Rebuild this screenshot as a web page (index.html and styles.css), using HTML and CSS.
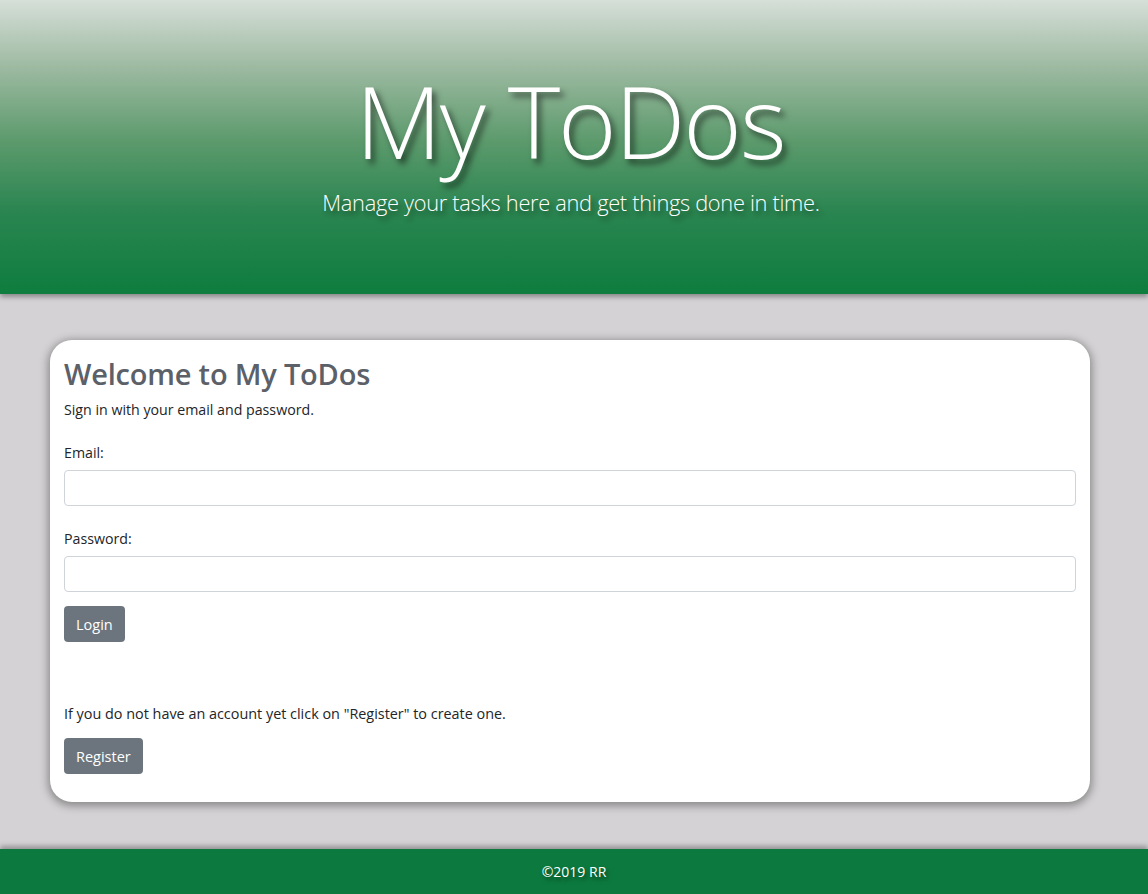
FILE: index.html
```html
<!DOCTYPE html>
<html lang="en">
<head>
<meta charset="utf-8">
<title>My ToDos</title>
<link rel="stylesheet" href="styles.css">
</head>
<body>
<header class="hero">
  <h1 class="hero-title">My ToDos</h1>
  <p class="hero-sub">Manage your tasks here and get things done in time.</p>
</header>
<main class="main">
  <section class="card">
    <h2 class="card-title">Welcome to My ToDos</h2>
    <p class="intro">Sign in with your email and password.</p>
    <form class="form">
      <label class="label" for="email">Email:</label>
      <input class="input" id="email" type="email">
      <label class="label" for="password">Password:</label>
      <input class="input" id="password" type="password">
      <button class="btn" type="button">Login</button>
    </form>
    <p class="register-text">If you do not have an account yet click on "Register" to create one.</p>
    <button class="btn" type="button">Register</button>
  </section>
</main>
<footer class="footer">©2019 RR</footer>
</body>
</html>
```
FILE: styles.css
```css
* { box-sizing: border-box; }
html, body { margin: 0; padding: 0; }
body {
  font-family: "Open Sans", "Noto Sans", sans-serif;
  background: #d4d2d4;
  color: #212529;
  min-height: 894px;
  display: flex;
  flex-direction: column;
}
.hero {
  height: 294px;
  background: linear-gradient(to bottom, #d6dfd8 0%, #9fbba3 22%, #5c9a6c 48%, #2a8550 72%, #0e7d3e 100%);
  box-shadow: 0 3px 5px rgba(0,0,0,0.35);
  text-align: center;
  color: #fff;
  padding-top: 70px;
  position: relative;
  z-index: 1;
}
.hero-title {
  margin: 0 0 0 -8px;
  font-weight: 300;
  font-size: 100px;
  line-height: 100px;
  letter-spacing: -2px;
  text-shadow: 4px 5px 6px rgba(0,0,0,0.55);
}
.hero-sub {
  margin: 18px 0 0 -6px;
  font-weight: 300;
  font-size: 21.8px;
  line-height: 30px;
  letter-spacing: -0.3px;
  text-shadow: 3px 4px 5px rgba(0,0,0,0.45);
}
.main {
  flex: 1;
  padding: 46px 58px 47px 50px;
}
.card {
  background: #fff;
  border-radius: 22px;
  box-shadow: 0 2px 8px 2px rgba(0,0,0,0.35);
  padding: 14px 14px 28px 14px;
  height: 462px;
}
.card-title {
  margin: 0;
  font-size: 29px;
  font-weight: 600;
  color: #5b6069;
  line-height: 40px;
  letter-spacing: -0.2px;
}
.intro {
  margin: 6px 0 0;
  font-size: 14.2px;
  line-height: 20px;
}
.form {
  display: flex;
  flex-direction: column;
  align-items: flex-start;
  margin-top: 23px;
}
.label {
  font-size: 14.2px;
  line-height: 20px;
  margin-bottom: 7px;
}
.input {
  width: 100%;
  height: 36px;
  border: 1px solid #ced4da;
  border-radius: 4px;
  margin-bottom: 23px;
  font: inherit;
}
.input:last-of-type { margin-bottom: 14px; }
.btn {
  font-family: inherit;
  font-size: 14.5px;
  background: #6c757d;
  color: #fff;
  border: none;
  border-radius: 4px;
  height: 36px;
  padding: 0 12px;
}
.register-text {
  margin: 62px 0 14px;
  font-size: 14.4px;
  line-height: 20px;
}
.footer {
  height: 45px;
  background: #0c7a3e;
  color: #fff;
  text-align: center;
  font-size: 14px;
  line-height: 45px;
  box-shadow: 0 -3px 5px rgba(0,0,0,0.3);
  text-shadow: 2px 3px 4px rgba(0,0,0,0.5);
}
```
